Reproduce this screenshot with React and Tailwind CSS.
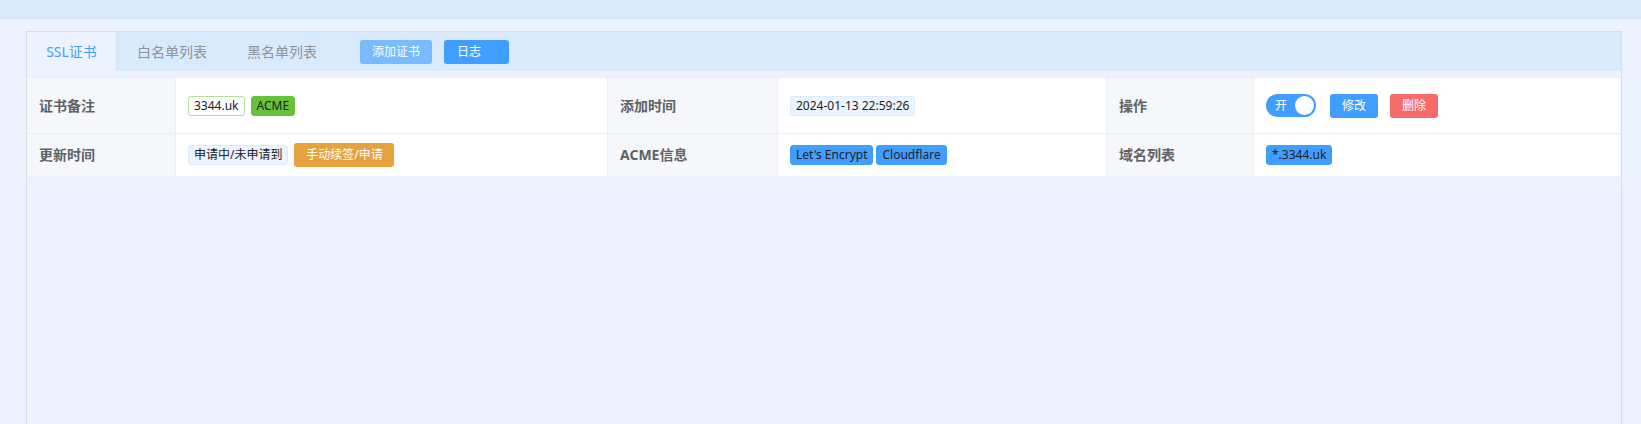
import React from 'react';

const tagBase = "inline-flex items-center h-[20px] px-[5px] text-xs rounded-[3px] border leading-none whitespace-nowrap";

function Label({ children, width }) {
  return (
    <div className={`${width} shrink-0 flex items-center pl-3 bg-[#f5f7fa] border-r border-[#ebeef5] text-sm font-bold text-[#606266]`}>
      {children}
    </div>
  );
}

function Value({ children, width, last }) {
  return (
    <div className={`${width} shrink-0 flex items-center pl-3 gap-[6px] bg-white ${last ? '' : 'border-r border-[#ebeef5]'}`}>
      {children}
    </div>
  );
}

export default function App() {
  return (
    <div className="h-[424px] overflow-hidden bg-[#ecf3fe] font-['Noto_Sans','Noto_Sans_CJK_SC',sans-serif]">
      <div className="h-[19px] bg-[#d9eafd] border-b border-[#d3e1f3]" />

      <div className="pt-3 pl-[26px]">
        <div className="w-[1596px] h-[420px] border border-[#d8dee8] bg-[#ecf3fe]">
          {/* tabs */}
          <div className="h-[39px] flex items-center bg-[#d9eafd]">
            <div className="w-[90px] h-full flex items-center justify-center bg-[#ecf3fe] border-r border-[#d6e0ee] text-sm text-[#409eff]">
              SSL证书
            </div>
            <div className="h-full flex items-center px-5 text-sm text-[#909399]">白名单列表</div>
            <div className="h-full flex items-center px-5 text-sm text-[#909399]">黑名单列表</div>
            <button className="ml-[23px] w-[72px] h-6 rounded-[3px] bg-[#79bbff] text-white text-xs">添加证书</button>
            <button className="ml-3 w-[65px] h-6 rounded-[3px] bg-[#409eff] text-white text-xs text-left pl-[13px]">日志</button>
          </div>

          <div className="h-[6px]" />

          {/* descriptions table */}
          <div className="mr-px border-t border-[#ebeef5]">
            <div className="flex h-[56px] border-b border-[#ebeef5]">
              <Label width="w-[149px]">证书备注</Label>
              <Value width="w-[432px]">
                <span className={`${tagBase} bg-white border-[#b3e19d] text-[#222]`}>3344.uk</span>
                <span className={`${tagBase} bg-[#67c23a] border-[#67c23a] text-[#222]`}>ACME</span>
              </Value>
              <Label width="w-[170px]">添加时间</Label>
              <Value width="w-[329px]">
                <span className={`${tagBase} bg-[#ecf5ff] border-[#d9ecff] text-[#222]`}>2024-01-13 22:59:26</span>
              </Value>
              <Label width="w-[147px]">操作</Label>
              <Value width="flex-1" last>
                <div className="w-[50px] h-[23px] rounded-full bg-[#409eff] flex items-center justify-between pl-[9px] pr-[2px]">
                  <span className="text-xs text-white leading-none">开</span>
                  <span className="w-[19px] h-[19px] rounded-full bg-white" />
                </div>
                <button className="ml-2 w-12 h-6 rounded-[3px] bg-[#409eff] text-white text-xs">修改</button>
                <button className="ml-[6px] w-12 h-6 rounded-[3px] bg-[#f56c6c] text-white text-xs">删除</button>
              </Value>
            </div>

            <div className="flex h-[43px] border-b border-[#ebeef5]">
              <Label width="w-[149px]">更新时间</Label>
              <Value width="w-[432px]">
                <span className={`${tagBase} bg-[#ecf5ff] border-[#d9ecff] text-[#222]`}>申请中/未申请到</span>
                <button className="w-[100px] h-6 rounded-[3px] bg-[#e6a23c] text-white text-xs">手动续签/申请</button>
              </Value>
              <Label width="w-[170px]">ACME信息</Label>
              <Value width="w-[329px]">
                <div className="flex gap-[3px]">
                  <span className={`${tagBase} bg-[#409eff] border-[#409eff] text-[#222]`}>Let's Encrypt</span>
                  <span className={`${tagBase} bg-[#409eff] border-[#409eff] text-[#222]`}>Cloudflare</span>
                </div>
              </Value>
              <Label width="w-[147px]">域名列表</Label>
              <Value width="flex-1" last>
                <span className={`${tagBase} bg-[#409eff] border-[#409eff] text-[#222]`}>*.3344.uk</span>
              </Value>
            </div>
          </div>
        </div>
      </div>
    </div>
  );
}
